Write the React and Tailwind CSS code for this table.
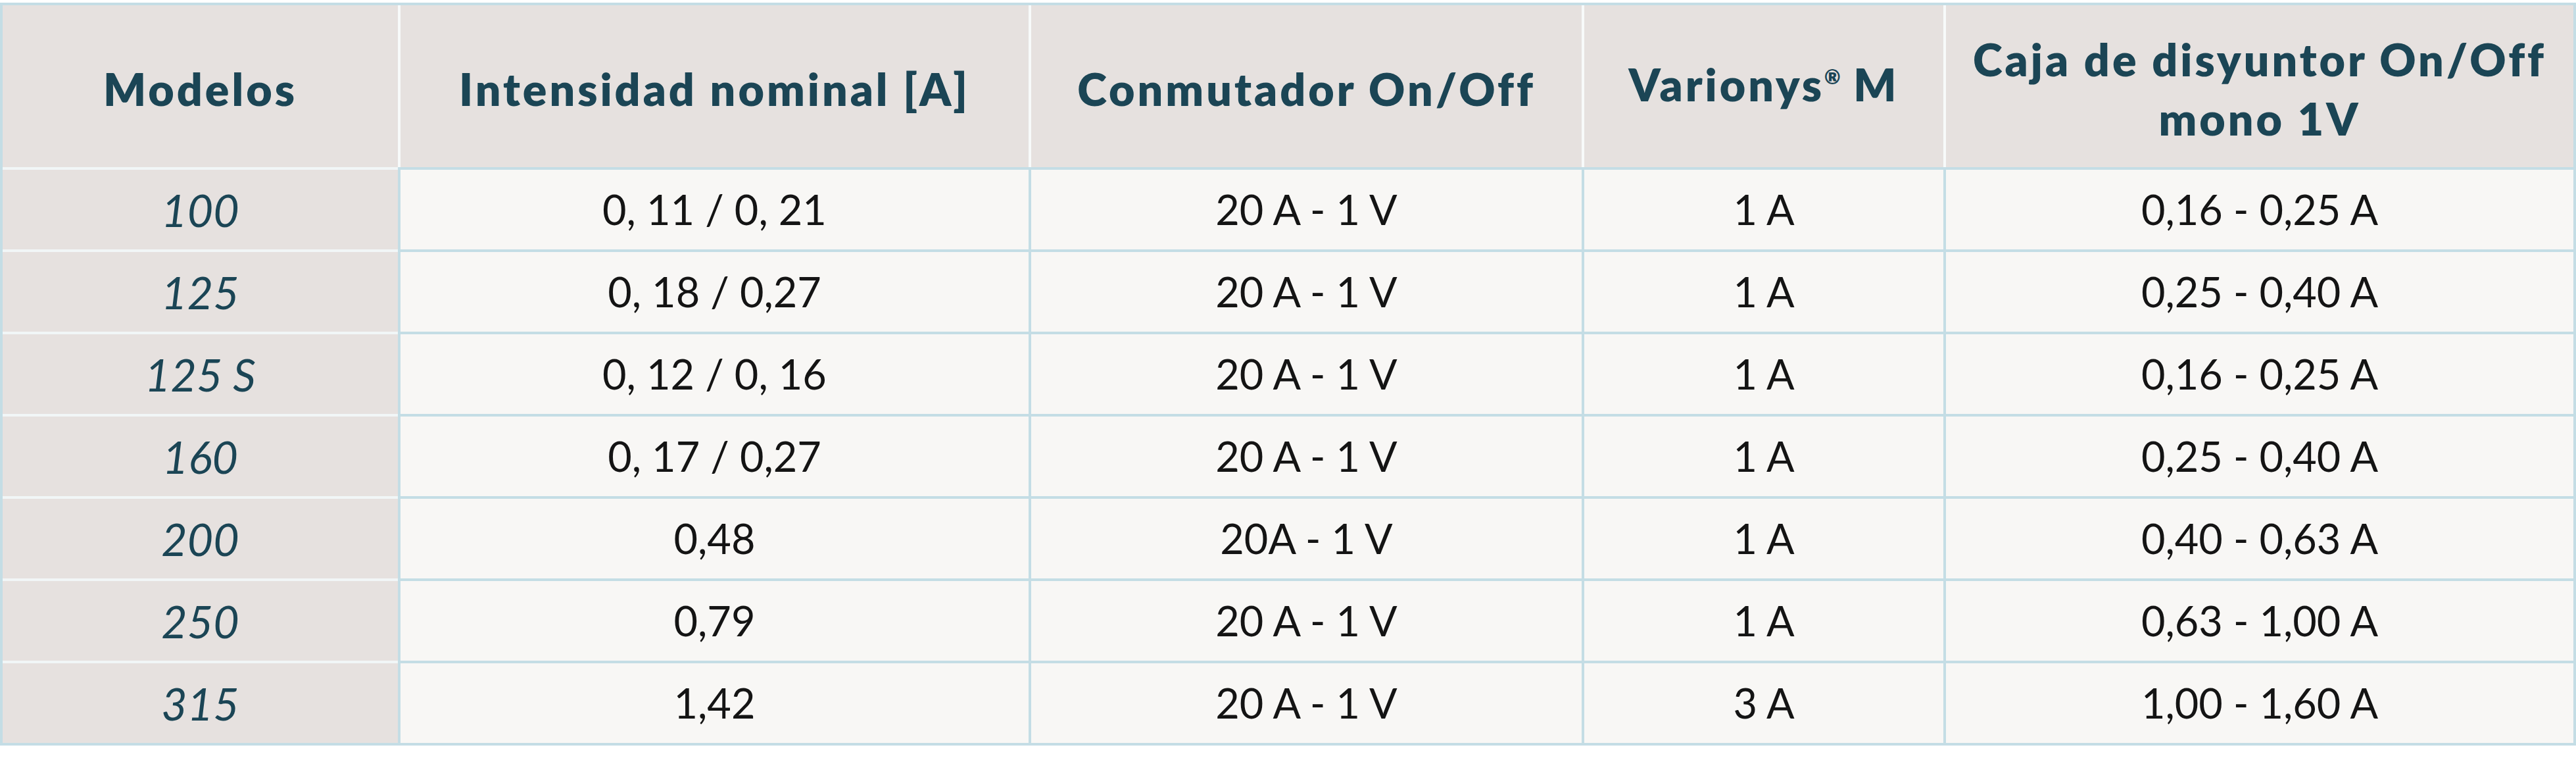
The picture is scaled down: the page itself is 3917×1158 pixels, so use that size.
import React from "react";

const headers = [
  ["Modelos"],
  ["Intensidad nominal [A]"],
  ["Conmutador On/Off"],
  ["VARIONYS"],
  ["Caja de disyuntor On/Off", "mono 1V"],
];

const rows = [
  ["100", "0, 11 / 0, 21", "20 A - 1 V", "1 A", "0,16 - 0,25 A"],
  ["125", "0, 18 / 0,27", "20 A - 1 V", "1 A", "0,25 - 0,40 A"],
  ["125 S", "0, 12 / 0, 16", "20 A - 1 V", "1 A", "0,16 - 0,25 A"],
  ["160", "0, 17 / 0,27", "20 A - 1 V", "1 A", "0,25 - 0,40 A"],
  ["200", "0,48", "20A - 1 V", "1 A", "0,40 - 0,63 A"],
  ["250", "0,79", "20 A - 1 V", "1 A", "0,63 - 1,00 A"],
  ["315", "1,42", "20 A - 1 V", "3 A", "1,00 - 1,60 A"],
];

export default function App() {
  return (
    <div className="w-[3917px] h-[1158px] bg-white pt-[4px] font-[Lato,sans-serif]">
      <div className="border-4 border-[#c4dde5] grid grid-cols-[601px_959px_841px_550px_958px]">
        {headers.map((h, i) => (
          <div
            key={i}
            className={
              "h-[246px] pt-[8px] bg-[#e6e1df] flex flex-col items-center justify-center text-[#1b4555] font-extrabold text-[68px] leading-[90px] tracking-[4px] text-center " +
              (i > 0 ? "border-l-4 border-[#f7fafa]" : "")
            }
          >
            {h[0] === "VARIONYS" ? (
              <span>
                Varionys<span className="relative -top-[26px] text-[30px] tracking-normal">®</span> M
              </span>
            ) : (
              h.map((l, j) => <span key={j}>{l}</span>)
            )}
          </div>
        ))}
        {rows.map((r, ri) =>
          r.map((c, ci) =>
            ci === 0 ? (
              <div
                key={ri + "-" + ci}
                className="h-[125px] border-t-4 border-[#f1f6f7] bg-[#e6e1df] flex items-center justify-center italic text-[#1b4555] text-[68px]"
              >
                {c}
              </div>
            ) : (
              <div
                key={ri + "-" + ci}
                className="h-[125px] border-t-4 border-l-4 border-[#c4dde5] bg-[#f8f7f5] flex items-center justify-center text-[#141414] text-[63px]"
              >
                {c}
              </div>
            )
          )
        )}
      </div>
    </div>
  );
}
